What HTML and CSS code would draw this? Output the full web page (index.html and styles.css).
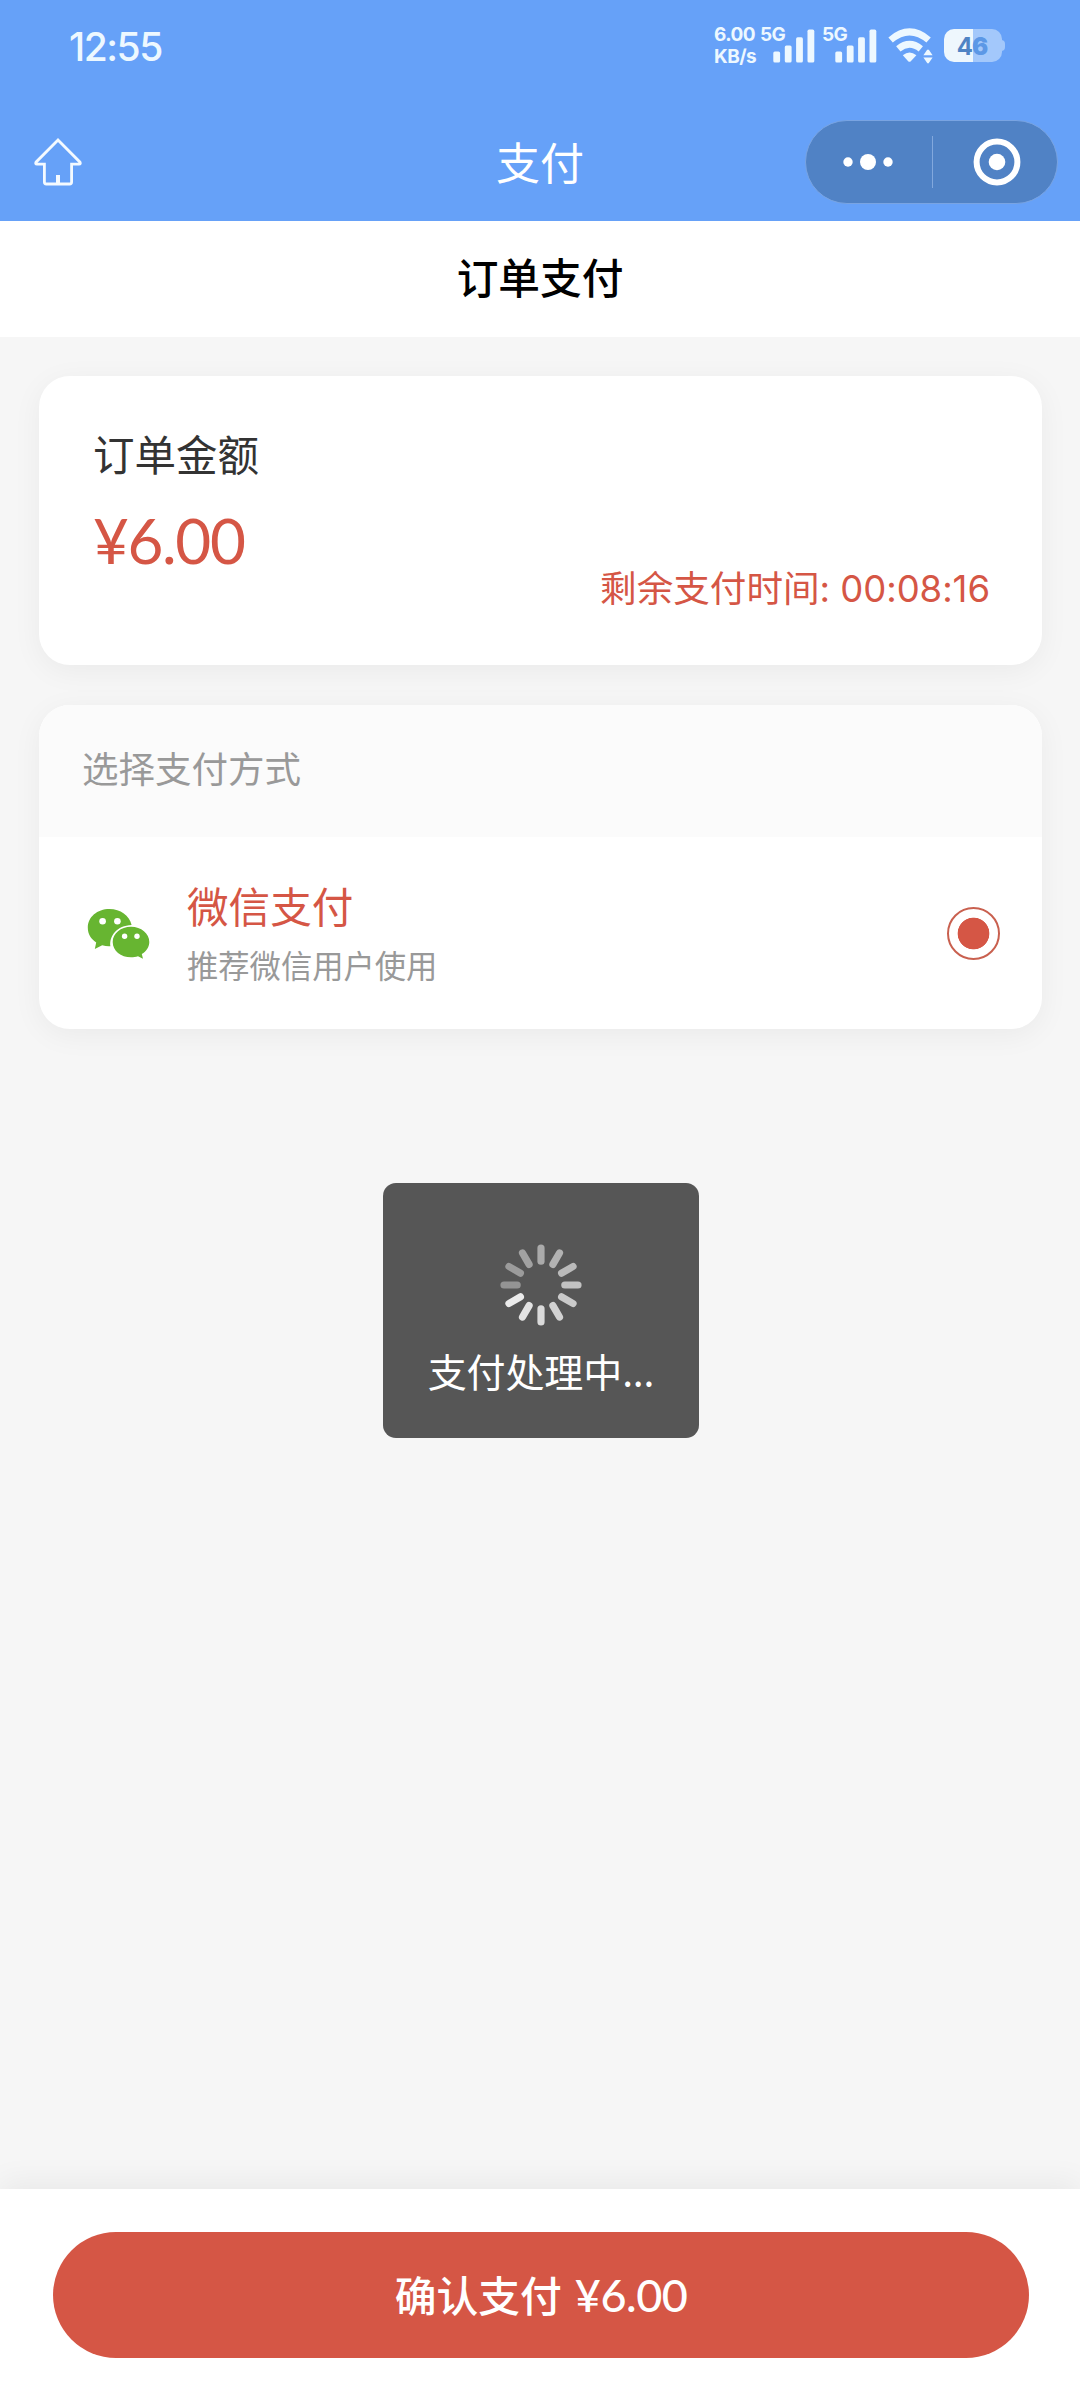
FILE: index.html
```html
<!DOCTYPE html>
<html lang="zh-CN">
<head>
<meta charset="utf-8">
<title>支付</title>
<link rel="stylesheet" href="styles.css">
</head>
<body>
<div class="app">
  <header class="header">
    <div class="status-bar">
      <span class="clock">12:55</span>
      <div class="status-icons">
        <div class="net-speed"><span>6.00</span><span>KB/s</span></div>
        <div class="cell">
          <span class="cell-label">5G</span>
          <svg class="cell-bars" viewBox="0 0 62 40">
            <rect x="13.3" y="26.5" width="6.8" height="11" rx="1.6"/>
            <rect x="24.8" y="20.5" width="6.8" height="17" rx="1.6"/>
            <rect x="36.1" y="12.3" width="6.8" height="25.2" rx="1.6"/>
            <rect x="47.5" y="4.6" width="6.8" height="32.9" rx="1.6"/>
          </svg>
        </div>
        <div class="cell">
          <span class="cell-label">5G</span>
          <svg class="cell-bars" viewBox="0 0 62 40">
            <rect x="13.3" y="26.5" width="6.8" height="11" rx="1.6"/>
            <rect x="24.8" y="20.5" width="6.8" height="17" rx="1.6"/>
            <rect x="36.1" y="12.3" width="6.8" height="25.2" rx="1.6"/>
            <rect x="47.5" y="4.6" width="6.8" height="32.9" rx="1.6"/>
          </svg>
        </div>
        <svg class="wifi" viewBox="0 0 46 40">
          <path class="wifi-arc" d="M2.6 15Q21.5 -1.2 40.6 15"/>
          <path class="wifi-arc" d="M10.3 23.8Q21.5 14.6 32.8 23.8"/>
          <path d="M14.8 30.2Q21.5 25 28.4 30.2L22.8 36.2Q21.5 37.4 20.2 36.2Z"/>
          <path class="wifi-gap" d="M34.4 31L40 21.6L45 30.6V38H35.5Z"/>
          <path d="M35.4 30.2L39 25Q40 23.8 41 25L44.6 30.2ZM35.4 32.6H44.6L41 37.8Q40 39 39 37.8Z"/>
        </svg>
        <div class="battery"><span class="battery-fill"></span><span class="battery-text">4<b>6</b></span></div>
      </div>
    </div>
    <nav class="nav">
      <svg class="home" viewBox="0 0 50 50">
        <path d="M25 3L47 25.2Q48 27.2 46 27.2H38.6V45Q38.6 47 36.6 47H13.4Q11.4 47 11.4 45V27.2H4Q2 27.2 3 25.2Z"/>
        <path class="home-door" d="M25 38V46"/>
      </svg>
      <h1 class="nav-title">支付</h1>
      <div class="capsule">
        <svg class="capsule-more" viewBox="0 0 60 50">
          <circle cx="10" cy="25" r="4.7"/><circle cx="30" cy="25" r="8"/><circle cx="50" cy="25" r="4.7"/>
        </svg>
        <span class="capsule-divider"></span>
        <svg class="capsule-close" viewBox="0 0 50 50">
          <circle class="ring" cx="25" cy="25" r="20.4"/><circle cx="25" cy="25" r="8.3"/>
        </svg>
      </div>
    </nav>
  </header>

  <h2 class="page-title">订单支付</h2>

  <main class="content">
    <section class="card amount-card">
      <p class="amount-label">订单金额</p>
      <p class="amount">¥6.00</p>
      <p class="countdown">剩余支付时间<span class="countdown-time">: 00:08:16</span></p>
    </section>

    <section class="card method-card">
      <h3 class="method-heading">选择支付方式</h3>
      <div class="method">
        <svg class="wechat" viewBox="0 0 64 52">
          <path d="M22.5 1C10.2 1 .8 9 .8 19.7C.8 26 4 31 9.2 34.4L7.8 41L15.2 37.2C18 38 20.6 38.4 23.4 38.2C22 28 30 17.4 44.6 16.9C42.4 7.5 33.4 1 22.5 1Z"/>
          <path d="M44 18.7C33.8 18.7 25.7 25.4 25.7 33.9C25.7 42.6 33.8 49.2 44 49.2C46.6 49.2 48.8 48.8 51 48.2L56 50.8L54.8 46C59.5 43 62.3 38.8 62.3 33.9C62.3 25.4 54.2 18.7 44 18.7Z"/>
          <g class="eyes"><circle cx="15.6" cy="13.3" r="3.3"/><circle cx="30.4" cy="13.3" r="3.3"/><circle cx="37.6" cy="28.3" r="2.7"/><circle cx="50" cy="28.3" r="2.7"/></g>
        </svg>
        <div class="method-text">
          <p class="method-name">微信支付</p>
          <p class="method-desc">推荐微信用户使用</p>
        </div>
        <span class="radio"></span>
      </div>
    </section>
  </main>

  <footer class="footer">
    <button class="pay-button">确认支付<span class="pay-amount">¥6.00</span></button>
  </footer>

  <div class="toast">
    <svg class="spinner" viewBox="-42 -42 84 84">
      <path d="M0 -37V-23.8" stroke="#aaa"/>
      <path d="M0 -37V-23.8" stroke="#b2b2b2" transform="rotate(30)"/>
      <path d="M0 -37V-23.8" stroke="#bababa" transform="rotate(60)"/>
      <path d="M0 -37V-23.8" stroke="#c2c2c2" transform="rotate(90)"/>
      <path d="M0 -37V-23.8" stroke="#cacaca" transform="rotate(120)"/>
      <path d="M0 -37V-23.8" stroke="#d2d2d2" transform="rotate(150)"/>
      <path d="M0 -37V-23.8" stroke="#dadada" transform="rotate(180)"/>
      <path d="M0 -37V-23.8" stroke="#e3e3e3" transform="rotate(210)"/>
      <path d="M0 -37V-23.8" stroke="#ebebeb" transform="rotate(240)"/>
      <path d="M0 -37V-23.8" stroke="#949494" transform="rotate(270)"/>
      <path d="M0 -37V-23.8" stroke="#9b9b9b" transform="rotate(300)"/>
      <path d="M0 -37V-23.8" stroke="#a2a2a2" transform="rotate(330)"/>
    </svg>
    <p class="toast-text">支付处理中...</p>
  </div>
</div>
</body>
</html>
```
FILE: styles.css
```css
* { box-sizing: border-box; margin: 0; padding: 0; }

body {
  background: #f6f6f6;
  font-family: "Noto Sans CJK SC", sans-serif;
  font-weight: 400;
}

.app {
  position: relative;
  display: flex;
  flex-direction: column;
  width: 1080px;
  height: 2400px;
  overflow: hidden;
}

/* Header */
.header { height: 221px; background: #66a1f8; color: #fff; }

.status-bar {
  display: flex;
  justify-content: space-between;
  height: 103px;
  padding: 25px 75px 0 69px;
}

.clock {
  font: 500 39px/44px Inter, sans-serif;
  letter-spacing: -1.5px;
  color: #edf8ff;
}

.status-icons { display: flex; align-items: flex-start; fill: #edf8ff; color: #edf8ff; }

.net-speed {
  display: flex;
  flex-direction: column;
  width: 46px;
  margin-top: -1px;
  font: 700 19px/22px Inter, sans-serif;
  letter-spacing: -0.5px;
}

.cell { position: relative; width: 62px; height: 40px; }
.cell-bars { display: block; width: 62px; height: 40px; }
.cell-label {
  position: absolute;
  left: 0;
  top: -3px;
  font: 700 19px/25px Inter, sans-serif;
  letter-spacing: -0.6px;
}
.wifi { width: 46px; height: 40px; margin-left: 4px; }
.wifi-arc { fill: none; stroke: #edf8ff; stroke-width: 6.8; }
.wifi-gap { fill: #66a1f8; }

.battery {
  position: relative;
  width: 58px;
  height: 33px;
  margin: 4px 3px 0 10px;
  border-radius: 10px;
  background: linear-gradient(90deg, #eef7fd 50%, #a3c8fb 50%);
}
.battery-fill {
  position: absolute;
  right: -3px;
  top: 11px;
  width: 4px;
  height: 11px;
  border-radius: 0 4px 4px 0;
  background: #a3c8fb;
}
.battery-text {
  display: block;
  padding-right: 2px;
  text-align: center;
  font: 700 24px/35px Inter, sans-serif;
  letter-spacing: -1px;
  color: #5084c4;
}
.battery-text b { color: #5c98e6; }

.nav {
  display: grid;
  grid-template-columns: 1fr auto 1fr;
  align-items: center;
  height: 118px;
  padding: 0 22px 0 33px;
}
.home { width: 50px; height: 50px; fill: none; stroke: #f4faff; stroke-width: 2.8; }
.home-door { stroke-width: 4; }
.nav-title { padding: 0 11px 3px 0; font-size: 44px; font-weight: 400; line-height: 60px; }

.capsule {
  justify-self: end;
  display: flex;
  align-items: center;
  width: 253px;
  height: 84px;
  padding: 0 0 0 32px;
  border: 1px solid #79a4e2;
  border-radius: 42px;
  background: #5082c5;
  fill: #fff;
}
.capsule-more { width: 60px; height: 50px; }
.capsule-divider { width: 1px; height: 52px; margin: 0 39px 0 34px; background: #82a8dd; }
.capsule-close { width: 50px; height: 50px; }
.ring { fill: none; stroke: #fff; stroke-width: 6; }

/* Page */
.page-title {
  height: 116px;
  background: #fff;
  color: #000;
  font-size: 41.7px;
  font-weight: 500;
  line-height: 110px;
  text-align: center;
}

.content {
  display: flex;
  flex: 1;
  flex-direction: column;
  gap: 40px;
  padding: 39px 38px 0 39px;
}

.card {
  overflow: hidden;
  border-radius: 31px;
  background: #fff;
  box-shadow: 0 6px 30px rgba(0, 0, 0, 0.05);
}

.amount-card {
  display: flex;
  flex-direction: column;
  height: 289px;
  padding: 47px 52px 0 54px;
}
.amount-label { font-size: 41.5px; line-height: 60px; color: #333; }
.amount {
  margin-top: 22px;
  font: 400 62px/70px Lato, sans-serif;
  letter-spacing: -1.4px;
  color: #d55645;
}
.countdown {
  align-self: flex-end;
  margin-top: -15px;
  font-size: 36.6px;
  line-height: 54px;
  color: #d55645;
}
.countdown-time { font-family: Inter, sans-serif; font-size: 36.5px; letter-spacing: -0.05px; }

.method-heading {
  height: 132px;
  padding-left: 43px;
  background: #fbfbfb;
  font-size: 36.5px;
  font-weight: 400;
  line-height: 126px;
  color: #999;
}
.method {
  display: flex;
  align-items: center;
  height: 192px;
  padding: 0 42px 0 48px;
}
.wechat { width: 64px; height: 52px; margin-top: 2px; fill: #67b531; }
.eyes { fill: #fff; }
.method-text { flex: 1; margin: -3px 0 0 36px; }
.method-name { font-size: 41.6px; line-height: 62px; color: #d55645; }
.method-desc { margin-top: 4px; font-size: 31.3px; line-height: 50px; color: #999; }
.radio {
  width: 53px;
  height: 53px;
  border: 2px solid #c9604f;
  border-radius: 50%;
  background: radial-gradient(circle, #d55645 15.5px, #fff 16.2px);
}

/* Footer */
.footer {
  height: 211px;
  padding: 43px 51px 0 53px;
  background: #fff;
  box-shadow: 0 -6px 30px rgba(0, 0, 0, 0.06);
}
.pay-button {
  display: flex;
  align-items: center;
  justify-content: center;
  width: 100%;
  height: 126px;
  padding-bottom: 3px;
  border: 0;
  border-radius: 63px;
  background: #d55645;
  color: #fff;
  font: 500 41.8px/60px "Noto Sans CJK SC", sans-serif;
}
.pay-amount { margin: 2px 0 0 13px; font: 500 45px/60px Lato, sans-serif; letter-spacing: -0.5px; }

/* Loading toast */
.toast {
  position: absolute;
  left: 383px;
  top: 1183px;
  display: flex;
  flex-direction: column;
  align-items: center;
  width: 316px;
  height: 255px;
  padding-top: 60px;
  border-radius: 13px;
  background: #565656;
  color: #fff;
}
.spinner { width: 84px; height: 84px; fill: none; stroke-width: 7.2; stroke-linecap: round; }
.toast-text { margin-top: 13px; font-size: 39px; line-height: 60px; letter-spacing: -0.1px; }
```
